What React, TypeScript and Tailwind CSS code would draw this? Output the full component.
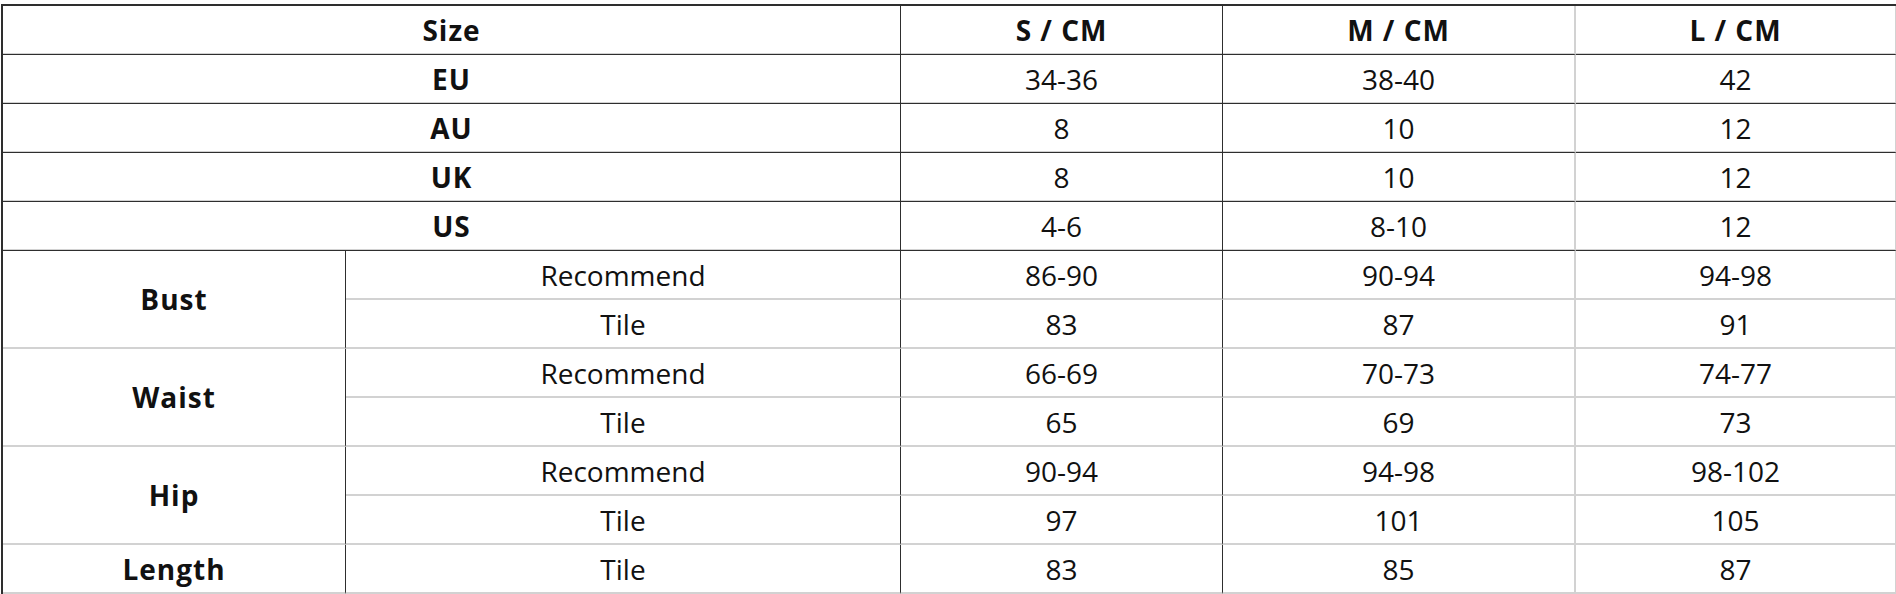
import React from 'react';

type Row = {
  group?: string;
  span?: number;
  label: string;
  values: string[];
};

const top = [
  { label: 'EU', values: ['34-36', '38-40', '42'] },
  { label: 'AU', values: ['8', '10', '12'] },
  { label: 'UK', values: ['8', '10', '12'] },
  { label: 'US', values: ['4-6', '8-10', '12'] },
];

const measures: Row[] = [
  { group: 'Bust', span: 2, label: 'Recommend', values: ['86-90', '90-94', '94-98'] },
  { label: 'Tile', values: ['83', '87', '91'] },
  { group: 'Waist', span: 2, label: 'Recommend', values: ['66-69', '70-73', '74-77'] },
  { label: 'Tile', values: ['65', '69', '73'] },
  { group: 'Hip', span: 2, label: 'Recommend', values: ['90-94', '94-98', '98-102'] },
  { label: 'Tile', values: ['97', '101', '105'] },
  { group: 'Length', span: 1, label: 'Tile', values: ['83', '85', '87'] },
];

// dark line = light pixel then dark pixel, like the old border="1" tables
const darkB = 'border-b border-b-[#2e2e2e] shadow-[inset_0_-1px_0_#d2d2d2]';
const lightB = 'border-b-2 border-b-[#d2d2d2]';
const darkR = 'border-r border-r-[#2e2e2e]';
const lightR = 'border-r-2 border-r-[#d2d2d2]';
const head = 'font-bold tracking-[1px]';

export default function App() {
  return (
    <div className="bg-white pt-[4px] pl-[1px] font-['Open_Sans',sans-serif] text-[#111] text-[28px] leading-none">
      <table className="table-fixed border-separate border-spacing-0 w-[1894px] border-t-2 border-t-[#2e2e2e] border-l-2 border-l-[#2e2e2e]">
        <colgroup>
          <col className="w-[343px]" />
          <col className="w-[555px]" />
          <col className="w-[322px]" />
          <col className="w-[353px]" />
          <col className="w-[321px]" />
        </colgroup>
        <tbody>
          <tr className="h-[49px]">
            <td colSpan={2} className={`text-center ${head} ${darkB} ${darkR}`}>Size</td>
            <td className={`text-center ${head} ${darkB} ${darkR}`}>S / CM</td>
            <td className={`text-center ${head} ${darkB} ${lightR}`}>M / CM</td>
            <td className={`text-center ${head} ${darkB} ${lightR}`}>L / CM</td>
          </tr>
          {top.map((r) => (
            <tr key={r.label} className="h-[49px]">
              <td colSpan={2} className={`text-center ${head} ${darkB} ${darkR}`}>{r.label}</td>
              <td className={`text-center ${darkB} ${darkR}`}>{r.values[0]}</td>
              <td className={`text-center ${darkB} ${lightR}`}>{r.values[1]}</td>
              <td className={`text-center ${darkB} ${lightR}`}>{r.values[2]}</td>
            </tr>
          ))}
          {measures.map((r, i) => (
            <tr key={i} className="h-[49px]">
              {r.group && (
                <td rowSpan={r.span} className={`text-center ${head} ${lightB} ${darkR}`}>{r.group}</td>
              )}
              <td className={`text-center ${lightB} ${darkR}`}>{r.label}</td>
              <td className={`text-center ${lightB} ${darkR}`}>{r.values[0]}</td>
              <td className={`text-center ${lightB} ${lightR}`}>{r.values[1]}</td>
              <td className={`text-center ${lightB} ${lightR}`}>{r.values[2]}</td>
            </tr>
          ))}
        </tbody>
      </table>
    </div>
  );
}
